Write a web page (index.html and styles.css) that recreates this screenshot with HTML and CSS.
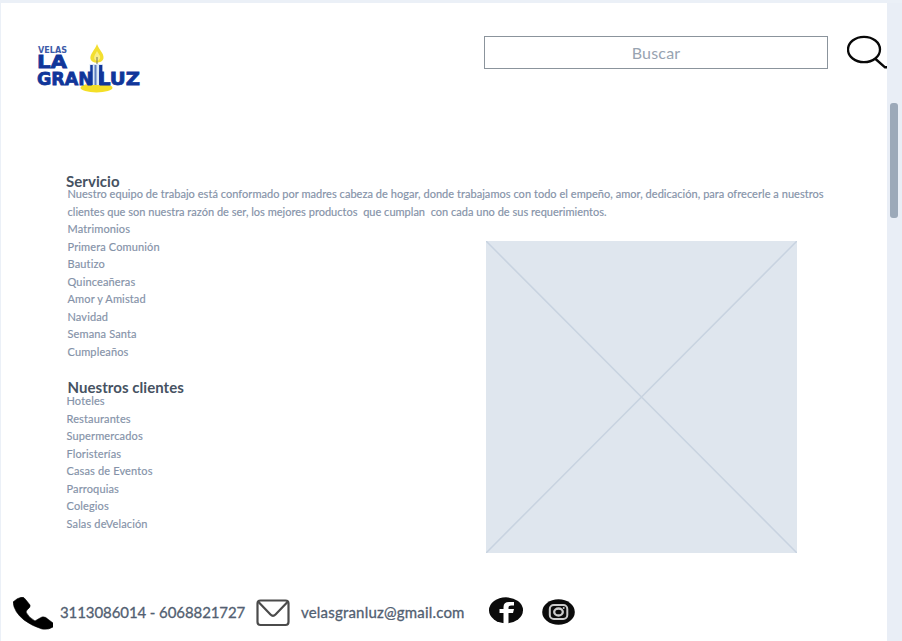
FILE: index.html
```html
<!DOCTYPE html>
<html lang="es">
<head>
<meta charset="utf-8">
<title>Velas La Gran Luz</title>
<link rel="stylesheet" href="styles.css">
</head>
<body>
<div class="page">
  <header class="header">
    <svg class="logo" viewBox="0 0 106 52" role="img" aria-label="Velas La Gran Luz">
      <ellipse cx="60.500" cy="44.800" rx="16" ry="4.700" fill="#f4df27"/>
      <path d="M61 1C59 7 53.500 11 54.500 16C55.500 21 67 21 67.500 15C68 10 63 7 61 1Z" fill="#f3df30"/>
      <path d="M61 8C59 12 57 14 59 17C61 19 65 17 64 13Z" fill="#f9ee86"/>
      <path d="M61 14V21" stroke="#777650" stroke-width="1"/>
      <path d="M53.500 21H67V42H53.500Z" fill="#dce9f6"/>
      <path d="M55.500 22V42" stroke="#143b9c" stroke-width="2.500"/>
      <path d="M59.500 22V42" stroke="#5c7fc0" stroke-width="2"/>
      <path d="M64.700 22V42" stroke="#10369a" stroke-width="3.200"/>
      <g class="logo-text">
        <text class="logo-small" x="2" y="10" textLength="29" lengthAdjust="spacingAndGlyphs">VELAS</text>
        <text x="1" y="25" textLength="30" lengthAdjust="spacingAndGlyphs">LA</text>
        <text x="1" y="42.300" textLength="56" lengthAdjust="spacingAndGlyphs">GRAN</text>
        <text x="62" y="42.300" textLength="42" lengthAdjust="spacingAndGlyphs">LUZ</text>
      </g>
    </svg>
    <div class="search">Buscar</div>
    <svg class="lens" viewBox="0 0 40 36" fill="none" stroke="#080808">
      <ellipse cx="17" cy="14.500" rx="16" ry="12.700" stroke-width="2.300"/>
      <path d="M28 23.500L38 32.300H41" stroke-width="2.400"/>
    </svg>
  </header>

  <main class="main">
    <h2 class="title title-service">Servicio</h2>
    <p class="copy"><span class="row row-first">Nuestro equipo de trabajo está conformado por madres cabeza de hogar, donde trabajamos con todo el empeño, amor, dedicación, para ofrecerle a nuestros</span><span class="row row-second">clientes que son nuestra razón de ser, los mejores productos&nbsp; que cumplan&nbsp; con cada uno de sus requerimientos.</span></p>
    <div class="columns">
      <div class="lists">
        <ul class="list">
          <li>Matrimonios</li>
          <li>Primera Comunión</li>
          <li>Bautizo</li>
          <li>Quinceañeras</li>
          <li>Amor y Amistad</li>
          <li>Navidad</li>
          <li>Semana Santa</li>
          <li>Cumpleaños</li>
        </ul>
        <h2 class="title title-clients">Nuestros clientes</h2>
        <ul class="list list-clients">
          <li>Hoteles</li>
          <li>Restaurantes</li>
          <li>Supermercados</li>
          <li>Floristerías</li>
          <li>Casas de Eventos</li>
          <li>Parroquias</li>
          <li>Colegios</li>
          <li>Salas deVelación</li>
        </ul>
      </div>
      <svg class="placeholder" viewBox="0 0 311 312">
        <rect width="311" height="312" fill="#dfe6ee"/>
        <path d="M0 0L311 312M311 0L0 312" stroke="#c8d3e0" stroke-width="1.500"/>
      </svg>
    </div>
  </main>

  <footer class="footer">
    <svg class="phone" viewBox="0 0 40 33">
      <path d="M0 5Q4 1 9 0Q11 0 13 3L17 8Q18 10 14 13L13 15Q15 20 22 24Q25 22 29 20Q32 19 36 23L40 26V30Q36 33 29 32Q19 29 11 23Q1 15 0 5Z" stroke="#000" stroke-width=".6"/>
    </svg>
    <span class="contact contact-phone">3113086014 - 6068821727</span>
    <svg class="mail" viewBox="0 0 34 28" fill="none" stroke="#4b4b4b" stroke-width="2.200">
      <rect x="1.500" y="1.500" width="31" height="24.500" rx="3"/>
      <path d="M2.500 3L14.500 15.500Q17 18 19.500 15.500L31.500 3"/>
    </svg>
    <span class="contact contact-mail">velasgranluz@gmail.com</span>
    <svg class="facebook" viewBox="0 0 34 27">
      <ellipse cx="17" cy="13.300" rx="17" ry="13" fill="#0b0b0b"/>
      <path d="M14.500 27V16H10.500V12H14.500V10Q14.500 5 20 5H25V8.500H22Q19.500 8.500 19.500 10.500V12H25L24 16H19.500V27Z" fill="#fff"/>
    </svg>
    <svg class="instagram" viewBox="0 0 33 26" fill="none" stroke="#ccc">
      <ellipse cx="16.500" cy="13" rx="16.300" ry="12.700" fill="#0b0b0b" stroke="none"/>
      <rect x="7.800" y="6" width="17.500" height="14" rx="4" stroke-width="2"/>
      <ellipse cx="16.500" cy="13" rx="4.300" ry="3.500" stroke-width="2.300"/>
      <circle cx="21.700" cy="9" r="1" fill="#ccc" stroke="none"/>
    </svg>
  </footer>
</div>
<div class="scrollbar"><div class="thumb"></div></div>
</body>
</html>
```
FILE: styles.css
```css
* { box-sizing: border-box; }
body {
  margin: 0;
  height: 641px;
  display: flex;
  overflow: hidden;
  padding: 3px 0 0 1px;
  background: #ebf0f7;
  font-family: Lato, "Liberation Sans", sans-serif;
}
.page { width: 886px; height: 638px; background: #fff; display: flex; flex-direction: column; }
.header { height: 167.500px; display: flex; align-items: flex-start; flex: none; }
.logo { width: 106px; height: 52px; margin: 40px 0 0 35px; flex: none; }
.logo-text { font: bold 18.500px "DejaVu Sans", sans-serif; fill: #10369a; stroke: #10369a; stroke-width: .8px; }
.logo-small { font-size: 8px; stroke-width: 0; fill: #3d5ba8; }
.search {
  width: 344px;
  height: 33px;
  margin: 33px 0 0 342px;
  border: 1px solid #8b949c;
  color: #98a3b1;
  font-size: 16px;
  line-height: 31px;
  text-align: center;
  letter-spacing: .2px;
  flex: none;
}
.lens { width: 40px; height: 36px; margin: 32px 0 0 18.500px; flex: none; }
.main { height: 422.500px; flex: none; }
.title { margin: 0; color: #465262; font-size: 15px; font-weight: 700; line-height: 18px; white-space: nowrap; letter-spacing: .05px; }
.title-service { margin-left: 65px; height: 14.900px; padding-top: 1.500px; }
.copy { margin: 0 0 0 66.500px; color: #8492a8; font-size: 11px; line-height: 17.500px; -webkit-text-stroke: .15px #8492a8; }
.row { display: block; white-space: nowrap; }
.row-first { letter-spacing: .042px; }
.row-second { letter-spacing: .014px; }
.columns { display: flex; align-items: flex-start; }
.lists { width: 485px; padding-left: 66.500px; }
.list { list-style: none; margin: 0; padding: 0; color: #8492a8; font-size: 11px; line-height: 17.500px; letter-spacing: .14px; -webkit-text-stroke: .15px #8492a8; }
.title-clients { margin-top: 18px; height: 14px; }
.list-clients { margin-left: -1px; }
.placeholder { width: 311px; height: 312px; margin-top: 20.600px; flex: none; }
.footer { display: flex; align-items: flex-start; height: 48px; flex: none; }
.phone { width: 40px; height: 33px; margin: 4px 0 0 12px; }
.contact { color: #526071; font-size: 15px; line-height: 20px; margin-top: 9px; white-space: nowrap; flex: none; -webkit-text-stroke: .3px #526071; }
.contact-phone { width: 189px; margin-left: 7px; letter-spacing: -.09px; }
.mail { width: 34px; height: 28px; margin: 6px 0 0 7px; }
.contact-mail { width: 165px; margin-left: 11px; letter-spacing: .2px; }
.facebook { width: 34px; height: 27px; margin: 4px 0 0 23px; }
.instagram { width: 33px; height: 26px; margin: 6px 0 0 19px; }
.scrollbar { width: 15px; height: 638px; padding: 100px 4px 0 3px; background: #e9eef6; }
.thumb { height: 115px; border-radius: 3px; background: #9ca9b9; }
```
